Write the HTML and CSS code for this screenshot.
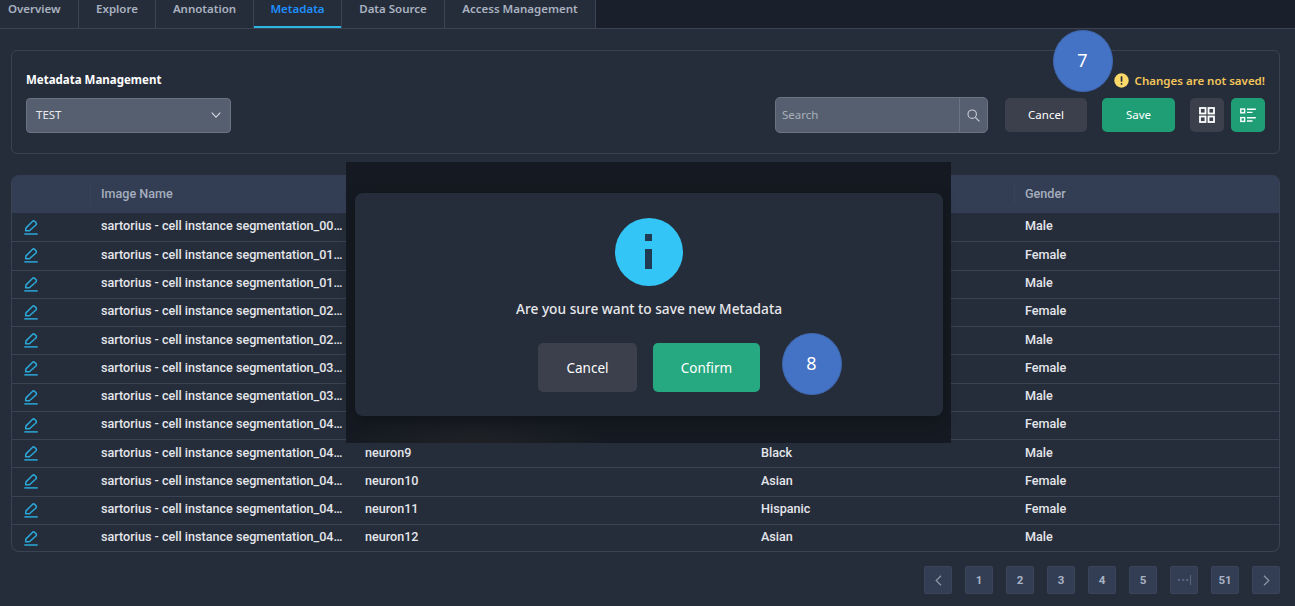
FILE: index.html
```html
<!DOCTYPE html>
<html lang="en">
<head>
    <meta charset="UTF-8">
    <title>Metadata</title>
    <link rel="stylesheet" href="styles.css">
</head>
<body>

<svg class="icon-defs" width="0" height="0">
    <symbol id="pencil" viewBox="0 0 14 15">
        <path d="M1.6 10.8 L2 7.9 L8.4 1.5 C9.1 0.8 10.1 0.8 10.8 1.5 L11.9 2.6 C12.6 3.3 12.6 4.3 11.9 5 L5.4 10.8 Z" fill="none" stroke="currentColor" stroke-width="1.5" stroke-linejoin="round"/>
        <path d="M0.3 13.9 H13.7" stroke="currentColor" stroke-width="1.5"/>
    </symbol>
</svg>

<nav class="tabs">
    <a class="tab tab-first">Overview</a>
    <a class="tab tab-explore">Explore</a>
    <a class="tab tab-annotation">Annotation</a>
    <a class="tab tab-metadata active">Metadata</a>
    <a class="tab tab-source">Data Source</a>
    <a class="tab tab-access">Access Management</a>
</nav>

<main class="content">
    <section class="panel">
        <div class="panel-left">
            <h2 class="panel-title">Metadata Management</h2>
            <div class="select">
                <span>TEST</span>
                <svg width="10" height="6" viewBox="0 0 10 6"><path d="M0.7 0.7 L5 5.2 L9.3 0.7" fill="none" stroke="#d5d9e0" stroke-width="1.1"/></svg>
            </div>
        </div>
        <div class="panel-right">
            <div class="warning">
                <svg width="15" height="15" viewBox="0 0 15 15"><circle cx="7.5" cy="7.5" r="7.2" fill="#fcd968"/><rect x="6.7" y="3.2" width="1.7" height="5.6" rx="0.6" fill="#262d3a"/><rect x="6.7" y="9.9" width="1.7" height="1.8" rx="0.6" fill="#262d3a"/></svg>
                <span>Changes are not saved!</span>
            </div>
            <div class="toolbar">
                <div class="search">
                    <span class="search-text">Search</span>
                    <span class="search-btn">
                        <svg width="13" height="13" viewBox="0 0 13 13"><circle cx="5.2" cy="5.2" r="4.2" fill="none" stroke="#c9ced6" stroke-width="1.1"/><path d="M8.3 8.3 L12.4 12.4" stroke="#c9ced6" stroke-width="1.2"/></svg>
                    </span>
                </div>
                <button class="btn btn-cancel">Cancel</button>
                <button class="btn btn-save">Save</button>
                <div class="views">
                    <button class="view-btn">
                        <svg width="16" height="16" viewBox="0 0 16 16" fill="none" stroke="#fff" stroke-width="1.8"><rect x="1" y="1" width="5.5" height="5.5"/><rect x="9.5" y="1" width="5.5" height="5.5"/><rect x="1" y="9.5" width="5.5" height="5.5"/><rect x="9.5" y="9.5" width="5.5" height="5.5"/></svg>
                    </button>
                    <button class="view-btn view-on">
                        <svg width="16" height="15" viewBox="0 0 16 15" fill="none" stroke="#fff" stroke-width="1.4"><rect x="0.8" y="1" width="3.8" height="3.8"/><rect x="0.8" y="9.6" width="3.8" height="3.8"/><path d="M7 1.2 H15.8 M7 4.4 H12.5 M7 9.8 H15.8 M7 13 H12.5"/></svg>
                    </button>
                </div>
            </div>
        </div>
    </section>

    <div class="table-wrap">
        <table class="meta-table">
            <colgroup>
                <col class="col-edit"><col class="col-name"><col class="col-type"><col class="col-race"><col>
            </colgroup>
            <thead>
                <tr><th></th><th>Image Name</th><th></th><th></th><th>Gender</th></tr>
            </thead>
            <tbody>
                <tr><td><svg class="edit"><use href="#pencil"/></svg></td><td>sartorius - cell instance segmentation_00…</td><td></td><td></td><td>Male</td></tr>
                <tr><td><svg class="edit"><use href="#pencil"/></svg></td><td>sartorius - cell instance segmentation_01…</td><td></td><td></td><td>Female</td></tr>
                <tr><td><svg class="edit"><use href="#pencil"/></svg></td><td>sartorius - cell instance segmentation_01…</td><td></td><td></td><td>Male</td></tr>
                <tr><td><svg class="edit"><use href="#pencil"/></svg></td><td>sartorius - cell instance segmentation_02…</td><td></td><td></td><td>Female</td></tr>
                <tr><td><svg class="edit"><use href="#pencil"/></svg></td><td>sartorius - cell instance segmentation_02…</td><td></td><td></td><td>Male</td></tr>
                <tr><td><svg class="edit"><use href="#pencil"/></svg></td><td>sartorius - cell instance segmentation_03…</td><td></td><td></td><td>Female</td></tr>
                <tr><td><svg class="edit"><use href="#pencil"/></svg></td><td>sartorius - cell instance segmentation_03…</td><td></td><td></td><td>Male</td></tr>
                <tr><td><svg class="edit"><use href="#pencil"/></svg></td><td>sartorius - cell instance segmentation_04…</td><td></td><td></td><td>Female</td></tr>
                <tr><td><svg class="edit"><use href="#pencil"/></svg></td><td>sartorius - cell instance segmentation_04…</td><td>neuron9</td><td>Black</td><td>Male</td></tr>
                <tr><td><svg class="edit"><use href="#pencil"/></svg></td><td>sartorius - cell instance segmentation_04…</td><td>neuron10</td><td>Asian</td><td>Female</td></tr>
                <tr><td><svg class="edit"><use href="#pencil"/></svg></td><td>sartorius - cell instance segmentation_04…</td><td>neuron11</td><td>Hispanic</td><td>Female</td></tr>
                <tr><td><svg class="edit"><use href="#pencil"/></svg></td><td>sartorius - cell instance segmentation_04…</td><td>neuron12</td><td>Asian</td><td>Male</td></tr>
            </tbody>
        </table>
    </div>

    <div class="pagination">
        <span class="page"><svg width="7" height="11" viewBox="0 0 7 11"><path d="M6 0.8 L1.2 5.5 L6 10.2" fill="none" stroke="#8d97a8" stroke-width="1.2"/></svg></span>
        <span class="page">1</span>
        <span class="page">2</span>
        <span class="page">3</span>
        <span class="page">4</span>
        <span class="page">5</span>
        <span class="page page-more">•••</span>
        <span class="page">51</span>
        <span class="page"><svg width="7" height="11" viewBox="0 0 7 11"><path d="M1 0.8 L5.8 5.5 L1 10.2" fill="none" stroke="#8d97a8" stroke-width="1.2"/></svg></span>
    </div>
</main>

<div class="overlay">
    <div class="modal">
        <div class="info-icon">
            <svg width="10" height="36" viewBox="0 0 10 36"><rect x="1" y="0" width="7" height="7" fill="#1f3a52"/><rect x="1" y="15" width="7" height="20" fill="#1f3a52"/></svg>
        </div>
        <p class="modal-text">Are you sure want to save new Metadata</p>
        <div class="modal-actions">
            <button class="modal-btn modal-cancel">Cancel</button>
            <button class="modal-btn modal-confirm">Confirm</button>
        </div>
    </div>
</div>

<span class="step step-7">7</span>
<span class="step step-8">8</span>

</body>
</html>
```

FILE: styles.css
```css
* {
    box-sizing: border-box;
}
html, body {
    margin: 0;
    height: 606px;
    overflow: hidden;
}
body {
    position: relative;
    font-family: "Roboto", sans-serif;
    background-color: #262d3a;
    color: #fff;
}
.icon-defs {
    position: absolute;
}

/* tabs */
.tabs {
    display: flex;
    height: 29px;
    background-color: #1a202b;
    border-bottom: 1px solid #3c4453;
}
.tab {
    height: 28px;
    padding-bottom: 10px;
    background-color: #262d3a;
    border-right: 1px solid #3c4453;
    font-family: "Noto Sans", sans-serif;
    font-size: 11.5px;
    font-weight: 600;
    line-height: 18px;
    color: #a9b2c0;
    text-align: center;
}
.tab-first { width: 79px; padding-left: 8px; text-align: left; }
.tab-explore { width: 77px; }
.tab-annotation { width: 98px; }
.tab-metadata { width: 88px; }
.tab-source { width: 103px; }
.tab-access { width: 151px; }
.tab.active {
    color: #1e90ff;
    box-shadow: inset 0 -2px 0 #2bb6e6;
}

.content {
    padding: 21px 15px 0 11px;
}

/* top panel */
.panel {
    display: flex;
    justify-content: space-between;
    height: 104px;
    padding: 0 14px 0 14px;
    border: 1px solid #3a4250;
    border-radius: 6px;
}
.panel-title {
    margin: 20px 0 10px;
    font-family: "Noto Sans", sans-serif;
    font-size: 11.5px;
    font-weight: 700;
    line-height: 17px;
}
.select {
    display: flex;
    align-items: center;
    justify-content: space-between;
    width: 205px;
    height: 35px;
    padding: 0 9px 2px;
    background-color: #565f6f;
    border: 1px solid #6a7382;
    border-radius: 4px;
    font-family: "Noto Sans", sans-serif;
    font-size: 11.5px;
    color: #e8eaee;
}
.panel-right {
    display: flex;
    flex-direction: column;
    align-items: flex-end;
}
.warning {
    display: flex;
    align-items: center;
    gap: 6px;
    margin-top: 22px;
    font-family: "Noto Sans", sans-serif;
    font-size: 11.5px;
    font-weight: 600;
    line-height: 15px;
    color: #f5c65a;
}
.toolbar {
    display: flex;
    align-items: center;
    margin-top: 9px;
}
.search {
    display: flex;
    width: 213px;
    height: 36px;
    margin-right: 17px;
    background-color: #565f6f;
    border: 1px solid #6a7382;
    border-radius: 5px;
}
.search-text {
    flex: 1;
    padding-left: 6px;
    font-family: "Noto Sans", sans-serif;
    font-size: 11.5px;
    line-height: 34px;
    color: #a8afba;
}
.search-btn {
    display: flex;
    align-items: center;
    justify-content: center;
    width: 28px;
    border-left: 1px solid #6a7382;
}
.btn, .view-btn, .modal-btn {
    border: none;
    color: #fff;
    font-family: "Noto Sans", sans-serif;
    padding: 0;
}
.btn {
    height: 34px;
    padding-bottom: 2px;
    border-radius: 5px;
    font-size: 11.5px;
}
.btn-cancel {
    width: 82px;
    margin-right: 15px;
    background-color: #3b404c;
}
.btn-save {
    width: 73px;
    margin-right: 15px;
    background-color: #1f9e76;
}
.views {
    display: flex;
    gap: 7px;
}
.view-btn {
    display: flex;
    align-items: center;
    justify-content: center;
    width: 34px;
    height: 34px;
    border-radius: 5px;
    background-color: #3b404c;
}
.view-on {
    background-color: #1f9e76;
}

/* table */
.table-wrap {
    width: 1269px;
    height: 377px;
    margin-top: 21px;
    border: 1px solid #3a4353;
    border-top: none;
    border-radius: 8px;
    overflow: hidden;
}
.meta-table {
    width: 100%;
    table-layout: fixed;
    border-collapse: separate;
    border-spacing: 0;
    font-size: 12.6px;
    font-weight: 500;
}
.col-edit { width: 77px; }
.col-name { width: 264px; }
.col-type { width: 396px; }
.col-race { width: 264px; }
.meta-table th {
    position: relative;
    height: 38px;
    padding: 0 12px 2px;
    background-color: #333e55;
    color: #a5aebd;
    font-weight: 500;
    text-align: left;
}
.meta-table th:not(:first-child)::before {
    content: "";
    position: absolute;
    left: 1px;
    top: 9px;
    bottom: 9px;
    border-left: 1px solid #38435a;
}
.meta-table td {
    height: 28.25px;
    padding: 0 12px 3px;
    border-top: 1px solid #3a4353;
    color: #e4e6eb;
    white-space: nowrap;
}
.meta-table tbody tr:first-child td {
    border-top: none;
}
.edit {
    display: block;
    width: 14px;
    height: 15px;
    margin-top: 3px;
    color: #2ba8d8;
}

/* pagination */
.pagination {
    display: flex;
    justify-content: flex-end;
    gap: 13px;
    width: 1269px;
    margin-top: 14px;
}
.page {
    display: flex;
    align-items: center;
    justify-content: center;
    width: 28px;
    height: 28px;
    background-color: #333e55;
    border: 1px solid #3a4559;
    border-radius: 2px;
    color: #a9b2c2;
    font-size: 11.5px;
    font-weight: 700;
}
.page-more {
    color: #5a6680;
    font-size: 9px;
    letter-spacing: 1px;
}
.page-more::after {
    content: "";
    height: 10px;
    border-left: 1px solid #5a6680;
}

/* confirm dialog */
.overlay {
    position: absolute;
    left: 346px;
    top: 162px;
    width: 605px;
    height: 281px;
    padding: 31px 8px 0 9px;
    background-color: #151a22;
    background-image: radial-gradient(ellipse 130px 34px at 130px 281px, #1f2125, transparent);
}
.modal {
    display: flex;
    flex-direction: column;
    align-items: center;
    height: 223px;
    padding-top: 25px;
    background-color: #262d3a;
    border-radius: 8px;
    box-shadow: 0 4px 14px rgba(0, 0, 0, 0.3);
}
.info-icon {
    display: flex;
    align-items: center;
    justify-content: center;
    width: 68px;
    height: 68px;
    border-radius: 50%;
    background-color: #33c5f5;
}
.modal-text {
    margin: 13px 0 0;
    font-family: "Noto Sans", sans-serif;
    font-size: 13.7px;
    font-weight: 500;
    line-height: 20px;
    color: #e6e8ec;
}
.modal-actions {
    display: flex;
    gap: 16px;
    margin-top: 24px;
}
.modal-btn {
    height: 49px;
    border-radius: 5px;
    font-size: 13.5px;
}
.modal-cancel {
    width: 99px;
    background-color: #3b404c;
}
.modal-confirm {
    width: 107px;
    background-color: #26a880;
}

/* numbered callouts */
.step {
    position: absolute;
    display: flex;
    align-items: center;
    justify-content: center;
    width: 60px;
    height: 62px;
    padding: 0 1px 2px 0;
    border-radius: 50%;
    background-color: #4472c4;
    border: 1px solid #3f68b0;
    font-family: "Noto Sans", sans-serif;
    font-size: 18px;
    color: #fff;
}
.step-7 { left: 1053px; top: 30px; }
.step-8 { left: 782px; top: 333px; }
```
